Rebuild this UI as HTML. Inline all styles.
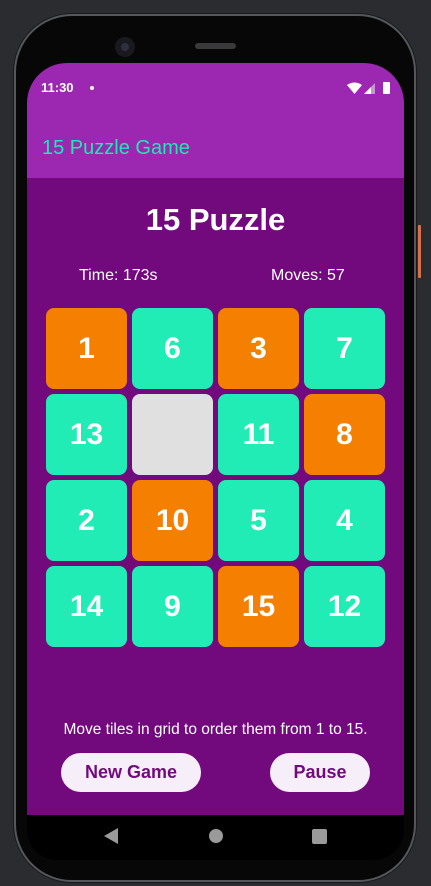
<!DOCTYPE html>
<html><head><style>
*{margin:0;padding:0;box-sizing:border-box}
body{width:431px;height:886px;background:#2b2c30;position:relative;overflow:hidden;font-family:"Liberation Sans",Roboto,sans-serif}
.phone{position:absolute;left:14px;top:14px;width:402px;height:868px;background:#070708;border-radius:58px;border:2px solid #55575b;box-shadow:0 0 0 1px #1a1a1c}
.screen{position:absolute;left:27px;top:63px;width:377px;height:797px;border-radius:40px 40px 30px 30px;overflow:hidden;background:#000}
.bar{position:absolute;left:0;top:0;width:377px;height:115px;background:#9c27b0}
.content{position:absolute;left:0;top:115px;width:377px;height:637px;background:#720a7e}
.tile{position:absolute;width:81px;height:81px;border-radius:8px;color:#fff;font-weight:bold;font-size:30px;display:flex;align-items:center;justify-content:center}
.o{background:#f57f00}.t{background:#22ecb6}.g{background:#e0e0e0}
.btn{position:absolute;height:39px;border-radius:20px;background:#f6eef8;color:#720a7e;font-size:18px;font-weight:bold;display:flex;align-items:center;justify-content:center}
</style></head><body>
<div class="phone"></div>
<div style="position:absolute;left:115px;top:37px;width:20px;height:20px;border-radius:50%;background:#1a1a1e"></div>
<div style="position:absolute;left:121px;top:43px;width:8px;height:8px;border-radius:50%;background:#2c3040"></div>
<div style="position:absolute;left:195px;top:43px;width:41px;height:6px;border-radius:3px;background:#3a3a3d"></div>
<div style="position:absolute;left:418px;top:225px;width:3px;height:53px;background:#d9704d;border-radius:1px"></div>
<div class="screen">
 <div class="bar">
  <div style="position:absolute;left:14px;top:17px;color:#fff;font-size:13px;font-weight:bold">11:30</div>
  <div style="position:absolute;left:63px;top:23px;width:4px;height:4px;border-radius:50%;background:#fff"></div>
  <svg style="position:absolute;left:320px;top:19px" width="50" height="14"><path d="M0 3Q7.5-2 15 3L7.5 12Z" fill="#fff"/><path d="M17 12L28 1V12Z" fill="#c993d6"/><path d="M17 12L24 5V12Z" fill="#fff"/><rect x="36" y="0" width="7" height="12" rx="1" fill="#fff"/></svg>
  <div style="position:absolute;left:15px;top:74px;color:#1de9b6;font-size:20px">15 Puzzle Game</div>
 </div>
 <div class="content">
  <div style="position:absolute;left:0;width:377px;top:24px;text-align:center;color:#fff;font-weight:bold;font-size:31px">15 Puzzle</div>
  <div style="position:absolute;left:52px;top:89px;color:#fff;font-size:16px">Time: 173s</div>
  <div style="position:absolute;left:244px;top:89px;color:#fff;font-size:16px">Moves: 57</div>
  <div class="tile o" style="left:19px;top:130px">1</div>
  <div class="tile t" style="left:105px;top:130px">6</div>
  <div class="tile o" style="left:191px;top:130px">3</div>
  <div class="tile t" style="left:277px;top:130px">7</div>
  <div class="tile t" style="left:19px;top:216px">13</div>
  <div class="tile g" style="left:105px;top:216px"></div>
  <div class="tile t" style="left:191px;top:216px">11</div>
  <div class="tile o" style="left:277px;top:216px">8</div>
  <div class="tile t" style="left:19px;top:302px">2</div>
  <div class="tile o" style="left:105px;top:302px">10</div>
  <div class="tile t" style="left:191px;top:302px">5</div>
  <div class="tile t" style="left:277px;top:302px">4</div>
  <div class="tile t" style="left:19px;top:388px">14</div>
  <div class="tile t" style="left:105px;top:388px">9</div>
  <div class="tile o" style="left:191px;top:388px">15</div>
  <div class="tile t" style="left:277px;top:388px">12</div>
  <div style="position:absolute;left:0;width:377px;top:543px;text-align:center;color:#fff;font-size:15.5px">Move tiles in grid to order them from 1 to 15.</div>
  <div class="btn" style="left:34px;top:575px;width:140px">New Game</div>
  <div class="btn" style="left:243px;top:575px;width:100px">Pause</div>
 </div>
 <svg style="position:absolute;left:0;top:752px" width="377" height="45"><path d="M77 21L91 13V29Z" fill="#9a9a9a"/><circle cx="189" cy="21" r="7" fill="#9a9a9a"/><rect x="285" y="14" width="15" height="15" rx="2" fill="#9a9a9a"/></svg>
</div>
</body></html>
